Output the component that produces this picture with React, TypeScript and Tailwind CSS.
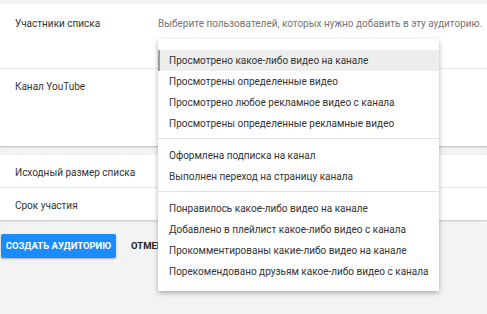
const font = { fontFamily: 'Roboto, "Noto Sans", sans-serif' };

const groups = [
  [
    'Просмотрено какое-либо видео на канале',
    'Просмотрены определенные видео',
    'Просмотрено любое рекламное видео с канала',
    'Просмотрены определенные рекламные видео',
  ],
  ['Оформлена подписка на канал', 'Выполнен переход на страницу канала'],
  [
    'Понравилось какое-либо видео на канале',
    'Добавлено в плейлист какое-либо видео с канала',
    'Прокомментированы какие-либо видео на канале',
    'Порекомендовано друзьям какое-либо видео с канала',
  ],
];

function Menu() {
  return (
    <div className="absolute left-[158px] top-[39px] w-[281px] bg-white pt-[11px] pb-[9px] shadow-[0_2px_5px_rgba(0,0,0,0.3)]">
      {groups.map((items, g) => (
        <div key={g} className={g > 0 ? 'border-t border-[#e0e0e0] mt-[4px] pt-[6px]' : ''}>
          {items.map((item, i) => {
            const active = g === 0 && i === 0;
            return (
              <div
                key={item}
                className={`h-[21px] flex items-center text-[10px] text-[#333] whitespace-nowrap ${
                  active ? 'bg-[#eeeeee] border-l-2 border-[#9e9e9e] pl-[9px]' : 'pl-[11px]'
                }`}
              >
                {item}
              </div>
            );
          })}
        </div>
      ))}
    </div>
  );
}

export default function App() {
  return (
    <div className="relative w-[487px] h-[314px] bg-[#f3f3f3] pt-[4px] overflow-hidden" style={font}>
      {/* Card 1 */}
      <div className="bg-white shadow-[0_1px_2px_rgba(0,0,0,0.25)]">
        <div className="h-[65px] flex border-b border-[#ececec] text-[10px]">
          <div className="w-[158px] shrink-0 pl-[15px] pt-[12px] text-[#333]">Участники списка</div>
          <div className="pt-[12px] text-[#757575] whitespace-nowrap">
            Выберите пользователей, которых нужно добавить в эту аудиторию.
          </div>
        </div>
        <div className="h-[77px] flex text-[10px]">
          <div className="pl-[15px] pt-[10px] text-[#333]">Канал YouTube</div>
        </div>
      </div>

      {/* Card 2 */}
      <div className="mt-[9px] bg-white shadow-[0_1px_2px_rgba(0,0,0,0.2)] text-[10px] text-[#333]">
        <div className="h-[33px] flex items-center pl-[15px] pt-[2px] border-b border-[#ececec]">
          Исходный размер списка
        </div>
        <div className="h-[32px] flex items-center pl-[15px] pt-[2px]">Срок участия</div>
      </div>

      {/* Actions */}
      <div className="mt-[14px] flex items-center">
        <button className="ml-[1px] w-[115px] h-[24px] bg-[#1a8cff] text-white text-[9.5px] font-bold whitespace-nowrap rounded-[2px] shadow-[0_1px_2px_rgba(0,0,0,0.3)]">
          СОЗДАТЬ АУДИТОРИЮ
        </button>
        <button className="ml-[15px] text-[9.5px] font-bold text-[#222] whitespace-nowrap">ОТМЕНА</button>
      </div>

      <Menu />
    </div>
  );
}
